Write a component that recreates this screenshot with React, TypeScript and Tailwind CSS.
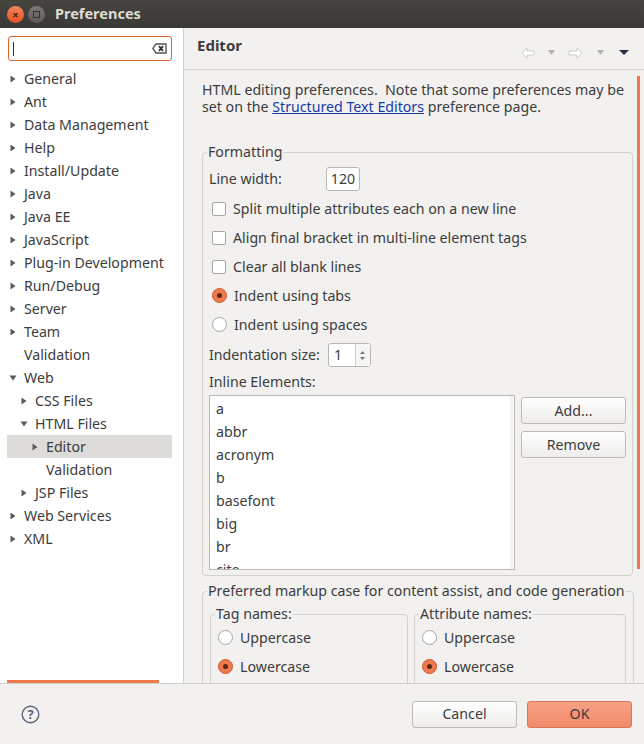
import type { ReactNode } from "react"

const font = { fontFamily: '"Noto Sans", "Open Sans", sans-serif' }

function Arrow({ open }: { open?: boolean }) {
  return (
    <svg width="8" height="8" viewBox="0 0 8 8" className="shrink-0">
      {open ? <path d="M0.5 1.5 L7.5 1.5 L4 6.5 Z" fill="#5a5a5a" /> : <path d="M1.5 0.5 L6.5 4 L1.5 7.5 Z" fill="#5a5a5a" />}
    </svg>
  )
}

type Node = { label: string; level: number; arrow?: "open" | "closed"; selected?: boolean }

const tree: Node[] = [
  { label: "General", level: 0, arrow: "closed" },
  { label: "Ant", level: 0, arrow: "closed" },
  { label: "Data Management", level: 0, arrow: "closed" },
  { label: "Help", level: 0, arrow: "closed" },
  { label: "Install/Update", level: 0, arrow: "closed" },
  { label: "Java", level: 0, arrow: "closed" },
  { label: "Java EE", level: 0, arrow: "closed" },
  { label: "JavaScript", level: 0, arrow: "closed" },
  { label: "Plug-in Development", level: 0, arrow: "closed" },
  { label: "Run/Debug", level: 0, arrow: "closed" },
  { label: "Server", level: 0, arrow: "closed" },
  { label: "Team", level: 0, arrow: "closed" },
  { label: "Validation", level: 0 },
  { label: "Web", level: 0, arrow: "open" },
  { label: "CSS Files", level: 1, arrow: "closed" },
  { label: "HTML Files", level: 1, arrow: "open" },
  { label: "Editor", level: 2, arrow: "closed", selected: true },
  { label: "Validation", level: 2 },
  { label: "JSP Files", level: 1, arrow: "closed" },
  { label: "Web Services", level: 0, arrow: "closed" },
  { label: "XML", level: 0, arrow: "closed" },
]

const padByLevel = ["pl-[2px]", "pl-[13px]", "pl-[24px]"]

function Checkbox({ label }: { label: string }) {
  return (
    <div className="flex items-center h-[29px] pl-[3px] gap-[7px]">
      <span className="w-[14px] h-[14px] rounded-[2px] border border-[#a9a6a0] bg-white" />
      <span>{label}</span>
    </div>
  )
}

function Radio({ label, checked }: { label: string; checked?: boolean }) {
  return (
    <div className="flex items-center h-[29px] gap-[7px]">
      {checked ? (
        <span className="w-[15px] h-[15px] rounded-full bg-[#ef7a4d] border border-[#cf5a2c] flex items-center justify-center">
          <span className="w-[5px] h-[5px] rounded-full bg-[#5a2a18]" />
        </span>
      ) : (
        <span className="w-[15px] h-[15px] rounded-full bg-white border border-[#a9a6a0]" />
      )}
      <span>{label}</span>
    </div>
  )
}

// fieldset keeps the legend sitting on the border like a GTK frame
function Group({ title, className, children }: { title: string; className?: string; children: ReactNode }) {
  return (
    <fieldset className={`border border-[#d3d1cc] rounded-[4px] ${className ?? ""}`}>
      <legend className="px-[1px] ml-[4px] leading-[16px]">{title}</legend>
      {children}
    </fieldset>
  )
}

function Button({ children, primary }: { children: ReactNode; primary?: boolean }) {
  return (
    <div
      className={`w-[105px] h-[27px] rounded-[3px] border flex items-center justify-center ${
        primary
          ? "bg-gradient-to-b from-[#f7a083] to-[#f18a68] border-[#d9775a]"
          : "bg-gradient-to-b from-white to-[#eeedeb] border-[#bdbab4]"
      }`}
    >
      {children}
    </div>
  )
}

const inline = ["a", "abbr", "acronym", "b", "basefont", "big", "br", "cite"]

export default function App() {
  return (
    <div className="w-[644px] h-[744px] flex flex-col bg-[#f2f1f0] text-[14.2px] text-[#3c3c3c] overflow-hidden" style={font}>
      {/* title bar */}
      <div className="h-[28px] flex items-center bg-gradient-to-b from-[#45443f] to-[#3a3935] pl-[7px] gap-[4px]">
        <span className="w-[17px] h-[17px] rounded-full bg-gradient-to-b from-[#f4845a] to-[#e2531f] flex items-center justify-center text-[#4a2010] text-[11px] font-bold leading-none">
          ×
        </span>
        <span className="w-[17px] h-[17px] rounded-full bg-gradient-to-b from-[#7a7973] to-[#5d5c57] flex items-center justify-center">
          <span className="w-[7px] h-[7px] border border-[#33322f]" />
        </span>
        <span className="ml-[6px] font-bold text-[14.5px] text-[#dfdbd2]">Preferences</span>
      </div>

      <div className="flex h-[656px] border-b border-[#d3d1cc]">
        {/* left tree */}
        <div className="w-[184px] bg-white border-r border-[#d3d1cc] flex flex-col">
          <div className="mt-[8px] mx-[8px] h-[25px] w-[164px] rounded-[3px] border border-[#e2622f] flex items-center justify-between px-[4px]">
            <span className="w-[1px] h-[14px] bg-[#333]" />
            <svg width="15" height="11" viewBox="0 0 15 11">
              <path d="M4 1 H14 V10 H4 L0.8 5.5 Z" fill="none" stroke="#555" strokeWidth="1.4" />
              <path d="M7 3.2 L11 7.8 M11 3.2 L7 7.8" stroke="#333" strokeWidth="1.8" />
            </svg>
          </div>
          <div className="mt-[6px] flex flex-col">
            {tree.map((n, i) => (
              <div
                key={i}
                className={`h-[23px] flex items-center ml-[7px] mr-[11px] ${padByLevel[n.level]} ${n.selected ? "bg-[#dedcd8]" : ""}`}
              >
                <span className="w-[15px] flex">{n.arrow && <Arrow open={n.arrow === "open"} />}</span>
                <span className="whitespace-nowrap">{n.label}</span>
              </div>
            ))}
          </div>
          <div className="mt-auto ml-[7px] w-[152px] h-[3px] bg-[#f0784a]" />
        </div>

        {/* right content */}
        <div className="flex-1 flex flex-col min-w-0">
          <div className="h-[42px] flex items-center justify-between pl-[13px] pr-[15px] border-b border-[#d8d6d1]">
            <span className="font-bold text-[15px] -mt-[6px]">Editor</span>
            <div className="flex items-center mt-[8px]">
              <svg width="14" height="12" viewBox="0 0 14 12">
                <path d="M1 6 L6 1 V4 H13 V8 H6 V11 Z" fill="white" stroke="#cfcdc8" />
              </svg>
              <svg width="7" height="5" viewBox="0 0 7 5" className="ml-[13px]"><path d="M0 0 H7 L3.5 5 Z" fill="#b3b1ac" /></svg>
              <svg width="15" height="12" viewBox="0 0 15 12" className="ml-[13px]">
                <path d="M14 6 L9 1 V4 H1 V8 H9 V11 Z" fill="white" stroke="#cfcdc8" />
              </svg>
              <svg width="7" height="5" viewBox="0 0 7 5" className="ml-[14px]"><path d="M0 0 H7 L3.5 5 Z" fill="#b3b1ac" /></svg>
              <svg width="10" height="5" viewBox="0 0 10 5" className="ml-[15px]"><path d="M0 0 H10 L5 5 Z" fill="#2b2a45" /></svg>
            </div>
          </div>

          <div className="flex-1 flex overflow-hidden">
            <div className="flex-1 pl-[18px] pr-[3px] pt-[11px] min-w-0">
              <div className="whitespace-nowrap">
                <div className="h-[17px] leading-[17px]">HTML editing preferences.&nbsp; Note that some preferences may be</div>
                <div className="h-[17px] leading-[17px]">
                  set on the <span className="text-[#1a3aa8] underline decoration-[#1a3aa8]">Structured Text Editors</span> preference page.
                </div>
              </div>

              <Group title="Formatting" className="mt-[29px] pb-[5px]">
                <div className="pl-[6px] pr-[5px]">
                  <div className="flex items-center h-[30px] mt-[4px]">
                    <span className="w-[117px]">Line width:</span>
                    <span className="w-[34px] h-[24px] rounded-[3px] border border-[#bab7b1] bg-white flex items-center justify-center">120</span>
                  </div>
                  <Checkbox label="Split multiple attributes each on a new line" />
                  <Checkbox label="Align final bracket in multi-line element tags" />
                  <Checkbox label="Clear all blank lines" />
                  <div className="pl-[3px]">
                    <Radio label="Indent using tabs" checked />
                    <Radio label="Indent using spaces" />
                  </div>
                  <div className="flex items-center h-[32px] gap-[8px]">
                    <span>Indentation size:</span>
                    <span className="w-[43px] h-[24px] rounded-[3px] border border-[#bab7b1] bg-white flex">
                      <span className="flex-1 pl-[5px] flex items-center">1</span>
                      <span className="w-[15px] border-l border-[#d3d1cc] flex flex-col items-center justify-center gap-[3px] bg-[#f6f5f4]">
                        <svg width="5" height="3" viewBox="0 0 5 3"><path d="M0 3 L2.5 0 L5 3 Z" fill="#777" /></svg>
                        <svg width="5" height="3" viewBox="0 0 5 3"><path d="M0 0 L2.5 3 L5 0 Z" fill="#777" /></svg>
                      </span>
                    </span>
                  </div>
                  <div className="h-[22px] flex items-center">Inline Elements:</div>
                  <div className="flex gap-[6px] mt-[2px]">
                    <div className="w-[306px] h-[175px] border border-[#bab7b1] bg-white overflow-hidden flex">
                      <div className="flex-1 pl-[6px] pt-[1px]">
                        {inline.map((t) => (
                          <div key={t} className="h-[23px] flex items-center">{t}</div>
                        ))}
                      </div>
                      <div className="w-[3px] mr-[1px] bg-[#f3f2f1]" />
                    </div>
                    <div className="flex flex-col gap-[7px] mt-[2px]">
                      <Button>Add...</Button>
                      <Button>Remove</Button>
                    </div>
                  </div>
                </div>
              </Group>

              <Group title="Preferred markup case for content assist, and code generation" className="mt-[7px] pb-[10px]">
                <div className="flex gap-[6px] mt-[7px] px-[7px]">
                  <Group title="Tag names:" className="w-[198px] pb-[6px]">
                    <div className="mt-[1px] pl-[7px]">
                      <Radio label="Uppercase" />
                      <Radio label="Lowercase" checked />
                    </div>
                  </Group>
                  <Group title="Attribute names:" className="w-[212px] pb-[6px]">
                    <div className="mt-[1px] pl-[7px]">
                      <Radio label="Uppercase" />
                      <Radio label="Lowercase" checked />
                    </div>
                  </Group>
                </div>
              </Group>
            </div>
            <div className="w-[8px] pt-[6px]">
              <div className="w-[3px] h-[493px] ml-[1px] bg-[#f0784a]" />
            </div>
          </div>
        </div>
      </div>

      {/* footer */}
      <div className="flex-1 flex items-center pl-[21px] pr-[12px]">
        <svg width="19" height="19" viewBox="0 0 19 19">
          <circle cx="9.5" cy="9.5" r="8.3" fill="none" stroke="#5a6478" strokeWidth="1.4" />
          <text x="9.5" y="14" textAnchor="middle" fontSize="13" fontWeight="bold" fill="#5a6478" fontFamily="Noto Sans, sans-serif">?</text>
        </svg>
        <div className="ml-auto flex gap-[10px]">
          <Button>Cancel</Button>
          <Button primary>OK</Button>
        </div>
      </div>
    </div>
  )
}
